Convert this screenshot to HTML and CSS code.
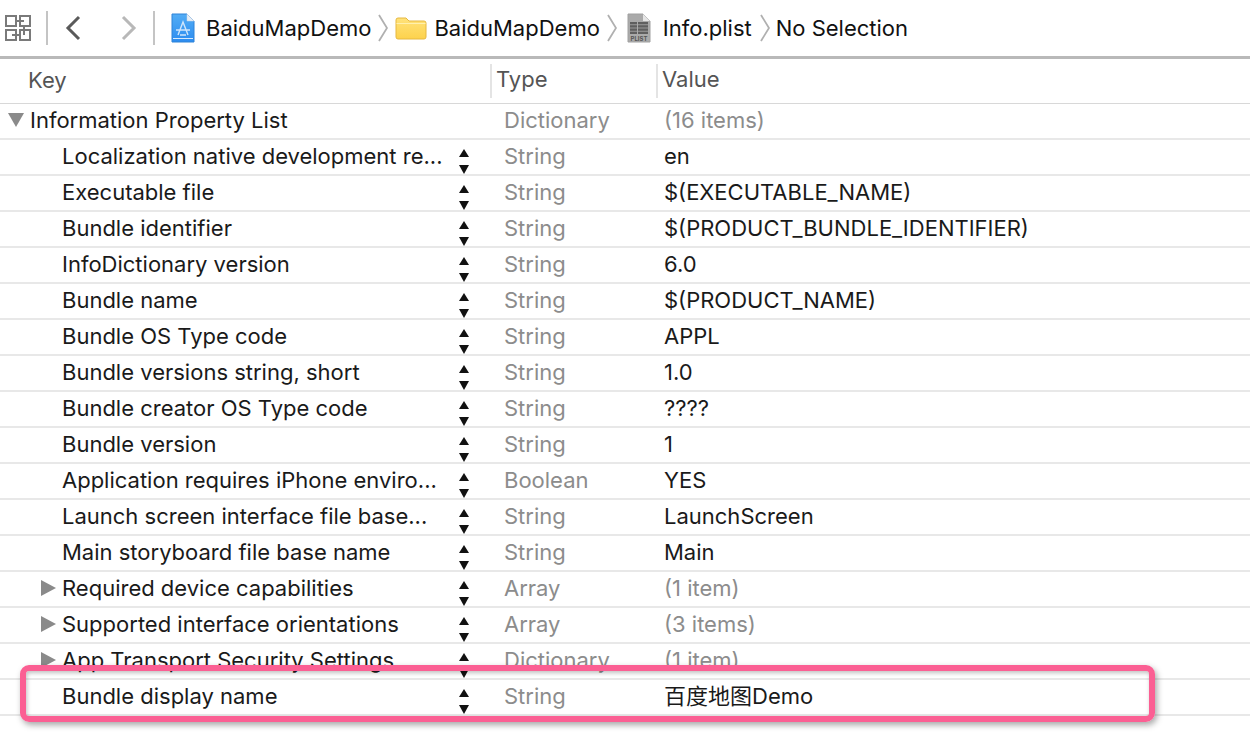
FILE: index.html
```html
<!DOCTYPE html>
<html lang="en">
<head>
<meta charset="utf-8">
<title>Info.plist</title>
<link rel="stylesheet" href="styles.css">
</head>
<body>
<svg class="defs" width="0" height="0" aria-hidden="true">
  <defs>
    <linearGradient id="folderFill" x1="0" y1="0" x2="0" y2="1"><stop offset="0" stop-color="#ffe27a"/><stop offset="1" stop-color="#fdd24c"/></linearGradient>
    <linearGradient id="appFill" x1="0" y1="0" x2="0" y2="1"><stop offset="0" stop-color="#53adf5"/><stop offset="1" stop-color="#2c8cf0"/></linearGradient>
  </defs>
  <symbol id="stepper" viewBox="0 0 12 26"><path d="M6 0L11 8H1Z"/><path d="M1 16H11L6 25Z"/></symbol>
  <symbol id="crumb" viewBox="0 0 10 28"><path d="M1 1L9 14L1 27" fill="none" stroke="#b0b0b0" stroke-width="1.8"/></symbol>
</svg>
<div class="page">
  <header class="toolbar">
    <svg class="grid-icon" viewBox="0 0 26 26"><g fill="none" stroke="#7a7a7a" stroke-width="2"><rect x="1" y="1" width="10" height="10"/><rect x="15" y="1" width="10" height="10"/><rect x="1" y="15" width="10" height="10"/><rect x="15" y="15" width="10" height="10"/><path d="M11 6H19M19 11V20M7 20H15"/></g></svg>
    <span class="tsep first"></span>
    <svg class="nav-back" viewBox="0 0 16 26"><path d="M14 2L3 13L14 24" fill="none" stroke="#5a5a5a" stroke-width="3"/></svg>
    <svg class="nav-fwd" viewBox="0 0 16 26"><path d="M2 2L13 13L2 24" fill="none" stroke="#b8b8b8" stroke-width="3"/></svg>
    <span class="tsep second"></span>
    <svg class="file-icon" viewBox="0 0 24 30"><path d="M1 1H16L23 8V29H1Z" fill="url(#appFill)" stroke="#2f83d8"/><path d="M16 1L23 8H16Z" fill="#e8eef5" stroke="#c9d6e4" stroke-width=".5"/><path d="M2 25.5H22" stroke="#d6e9fc" stroke-width="1"/><path d="M7 22L12 9L17 22M5 17H19M9 22H15" fill="none" stroke="#cfe5fb" stroke-width="1.4"/></svg>
    <span class="crumb-label c1">BaiduMapDemo</span>
    <svg class="chev"><use href="#crumb"/></svg>
    <svg class="folder" viewBox="0 0 32 24"><path d="M1 4Q1 2 3 2H11L14 5H29Q31 5 31 7V21Q31 23 29 23H3Q1 23 1 21Z" fill="url(#folderFill)" stroke="#e6b840"/><path d="M1.5 7.5H30.5" stroke="#fff0ad"/></svg>
    <span class="crumb-label c2">BaiduMapDemo</span>
    <svg class="chev"><use href="#crumb"/></svg>
    <svg class="plist-icon" viewBox="0 0 24 30"><path d="M1 1H16L23 8V29H1Z" fill="#aaa" stroke="#a0a0a0"/><path d="M16 1L23 8H16Z" fill="#e5e5e5"/><g fill="#5f5f5f"><rect x="3" y="9" width="18" height="2.4"/><rect x="3" y="12.2" width="18" height="2.4"/><rect x="3" y="15.4" width="18" height="2.4"/><rect x="3" y="18.6" width="18" height="2.4"/></g><rect x="10" y="9" width="1" height="12" fill="#aaa"/><text class="plist-tag" x="12" y="27.5" text-anchor="middle">PLIST</text></svg>
    <span class="crumb-label c3">Info.plist</span>
    <svg class="chev"><use href="#crumb"/></svg>
    <span class="crumb-label c4">No Selection</span>
  </header>
  <div class="head">
    <div class="hkey">Key</div>
    <div class="htype">Type</div>
    <div class="hval">Value</div>
  </div>
  <main class="rows">
    <div class="row root"><span class="key"><i class="tri down"></i>Information Property List</span><span class="step none"></span><span class="type">Dictionary</span><span class="val dim">(16 items)</span></div>
    <div class="row"><span class="key">Localization native development re...</span><svg class="step"><use href="#stepper"/></svg><span class="type">String</span><span class="val">en</span></div>
    <div class="row"><span class="key">Executable file</span><svg class="step"><use href="#stepper"/></svg><span class="type">String</span><span class="val">$(EXECUTABLE_NAME)</span></div>
    <div class="row"><span class="key">Bundle identifier</span><svg class="step"><use href="#stepper"/></svg><span class="type">String</span><span class="val">$(PRODUCT_BUNDLE_IDENTIFIER)</span></div>
    <div class="row"><span class="key">InfoDictionary version</span><svg class="step"><use href="#stepper"/></svg><span class="type">String</span><span class="val">6.0</span></div>
    <div class="row"><span class="key">Bundle name</span><svg class="step"><use href="#stepper"/></svg><span class="type">String</span><span class="val">$(PRODUCT_NAME)</span></div>
    <div class="row"><span class="key">Bundle OS Type code</span><svg class="step"><use href="#stepper"/></svg><span class="type">String</span><span class="val">APPL</span></div>
    <div class="row"><span class="key">Bundle versions string, short</span><svg class="step"><use href="#stepper"/></svg><span class="type">String</span><span class="val">1.0</span></div>
    <div class="row"><span class="key">Bundle creator OS Type code</span><svg class="step"><use href="#stepper"/></svg><span class="type">String</span><span class="val">????</span></div>
    <div class="row"><span class="key">Bundle version</span><svg class="step"><use href="#stepper"/></svg><span class="type">String</span><span class="val">1</span></div>
    <div class="row"><span class="key">Application requires iPhone enviro...</span><svg class="step"><use href="#stepper"/></svg><span class="type">Boolean</span><span class="val">YES</span></div>
    <div class="row"><span class="key">Launch screen interface file base...</span><svg class="step"><use href="#stepper"/></svg><span class="type">String</span><span class="val">LaunchScreen</span></div>
    <div class="row"><span class="key">Main storyboard file base name</span><svg class="step"><use href="#stepper"/></svg><span class="type">String</span><span class="val">Main</span></div>
    <div class="row"><span class="key"><i class="tri right"></i>Required device capabilities</span><svg class="step"><use href="#stepper"/></svg><span class="type">Array</span><span class="val dim">(1 item)</span></div>
    <div class="row"><span class="key"><i class="tri right"></i>Supported interface orientations</span><svg class="step"><use href="#stepper"/></svg><span class="type">Array</span><span class="val dim">(3 items)</span></div>
    <div class="row"><span class="key"><i class="tri right"></i>App Transport Security Settings</span><svg class="step"><use href="#stepper"/></svg><span class="type">Dictionary</span><span class="val dim">(1 item)</span></div>
    <div class="row"><span class="key">Bundle display name</span><svg class="step"><use href="#stepper"/></svg><span class="type">String</span><span class="val cn">百度地图Demo</span></div>
  </main>
  <div class="highlight"></div>
</div>
</body>
</html>
```
FILE: styles.css
```css
html, body { margin: 0; padding: 0; background: #fff; }
body { font-family: Inter, "Noto Sans CJK SC", sans-serif; font-size: 22px; color: #1a1a1a; overflow: hidden; }
.defs { position: absolute; }
.page { position: relative; width: 1250px; height: 746px; overflow: hidden; }
.toolbar { height: 56px; display: flex; align-items: center; border-bottom: 3px solid #b9b9b9; color: #111; }
.grid-icon { width: 26px; height: 26px; margin-left: 5px; }
.tsep { width: 2px; height: 34px; background: #c4c4c4; }
.tsep.first { margin-left: 15px; }
.nav-back { width: 16px; height: 26px; margin-left: 17px; }
.nav-fwd { width: 16px; height: 26px; margin-left: 40px; }
.tsep.second { margin-left: 16px; }
.file-icon { width: 24px; height: 30px; margin-left: 16px; }
.crumb-label { line-height: 1; }
.c1 { margin-left: 11px; }
.chev { width: 10px; height: 28px; margin-left: 7px; }
.folder { width: 32px; height: 24px; margin-left: 7px; }
.c2 { margin-left: 7px; }
.plist-icon { width: 24px; height: 30px; margin-left: 10px; }
.plist-tag { font-size: 6px; font-weight: 700; fill: #555; }
.c3 { margin-left: 12px; margin-right: 1px; }
.c4 { margin-left: 6px; }
.head { height: 44px; display: grid; grid-template-columns: 490px 166px 1fr; align-items: center; border-bottom: 1px solid #d8d8d8; color: #555; }
.hkey { padding-left: 28px; padding-bottom: 3px; }
.htype, .hval { height: 34px; line-height: 31px; border-left: 2px solid #e4e4e4; padding-left: 4px; }
.rows { display: flex; flex-direction: column; }
.row { height: 34px; border-bottom: 2px solid #e8e8e8; display: grid; grid-template-columns: 458px 12px 34px 160px 1fr; grid-template-rows: 34px; align-items: center; }
.key { display: flex; align-items: center; padding-left: 62px; padding-bottom: 2px; position: relative; white-space: nowrap; }
.root .key { padding-left: 30px; }
.tri { position: absolute; width: 0; height: 0; }
.tri.down { left: 8px; top: 6px; border-left: 8px solid transparent; border-right: 8px solid transparent; border-top: 14px solid #8a8a8a; }
.tri.right { left: 41px; top: 5px; border-top: 8.5px solid transparent; border-bottom: 8.5px solid transparent; border-left: 15px solid #8a8a8a; }
.step { width: 12px; height: 26px; fill: #111; align-self: end; margin-bottom: -1px; }
.step.none { height: 0; }
.type { grid-column: 4; color: #8c8c8c; padding-bottom: 2px; }
.val { color: #1a1a1a; padding-bottom: 2px; }
.val.dim { color: #8c8c8c; }
.val.cn { line-height: 26px; }
.highlight { position: absolute; left: 20px; top: 665px; width: 1123px; height: 45px; border: 6px solid #fb5f93; border-radius: 9px; box-shadow: 2px 3px 6px rgba(0,0,0,.35), inset 1px 2px 4px rgba(0,0,0,.25); }
```
